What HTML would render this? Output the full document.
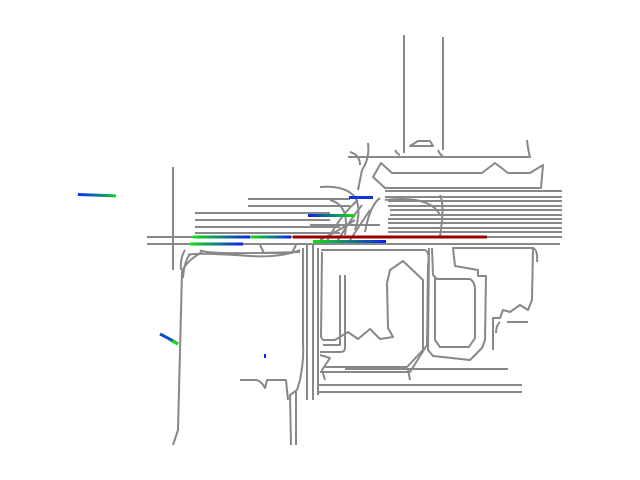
<!DOCTYPE html>
<html><head><meta charset="utf-8"><style>
html,body{margin:0;padding:0;background:#fff;width:640px;height:480px;overflow:hidden}
svg{display:block}
</style></head><body>
<svg width="640" height="480" viewBox="0 0 640 480" xmlns="http://www.w3.org/2000/svg">
<defs>
<linearGradient id="bg" x1="0" x2="1"><stop offset="0" stop-color="#0a22ee"/><stop offset="1" stop-color="#10e010"/></linearGradient>
<linearGradient id="gb" x1="0" x2="1"><stop offset="0" stop-color="#10e010"/><stop offset="1" stop-color="#0a22ee"/></linearGradient>
<linearGradient id="bt" x1="0" x2="1"><stop offset="0" stop-color="#1030ee"/><stop offset="0.5" stop-color="#1070a0"/><stop offset="1" stop-color="#10d020"/></linearGradient>
</defs>
<g fill="none" stroke="#888" stroke-width="2" stroke-linejoin="round">
<path d="M404 35 V153 M443 37 V150"/>
<path d="M348 157 H530 Q528 150 527 140"/>
<path d="M350 152 Q360 155 360 165 M395 150 Q398 155 400 155 M438 150 Q440 155 443 156"/>
<path d="M410 146 L418 141 L430 141 L433 146 Z"/>
<path d="M368 143 Q370 158 362 170 L358 190"/>
<path d="M381 163 L392 173 L482 173 L495 163 L508 173 L530 173 L543 165 L541 188 L385 188 L373 177 Z"/>
<path d="M173 167 V270"/>
<path d="M147 237 H562 M147 244 H560"/>
<path d="M385 191 H562 M385 197 H562 M388 201 H562 M388 206 H562 M390 210 H562 M390 215 H562 M388 219 H562 M388 223 H562 M388 228 H562 M388 232 H562"/>
<path d="M248 199 H350 M248 206 H350 M195 213 H330 M195 220 H330 M195 227 H340 M195 233 H340"/>
<path d="M320 187 Q345 185 355 197 Q362 210 355 230 M330 200 Q350 205 345 235 M440 195 Q445 205 440 236"/>
<path d="M385 200 Q430 195 440 215 M380 198 Q370 205 365 232"/>
<path d="M358 200 Q340 215 325 245 M362 205 Q350 220 335 245 M370 210 Q360 225 350 240 M355 220 Q340 230 320 240 M310 225 H380"/>
<path d="M185 250 Q180 258 181 270 M190 254 Q184 262 183 278"/>
<path d="M200 250 Q205 255 300 252 M188 255 Q195 252 250 256 Q280 258 300 250"/>
<path d="M260 245 L264 253 L292 253 L296 245"/>
<path d="M202 252 Q185 262 182 272 L178 430 L173 445"/>
<path d="M307 245 V400 M313 245 V400 M318 248 V395 M303 248 V345"/>
<path d="M303 345 Q304 360 300 380 L297 390 L290 395 L291 445 M296 392 L296 445"/>
<path d="M240 380 H257 Q262 382 265 388 L267 380 H286 L288 400"/>
<path d="M322 252 L321 337 L323 340 L335 340 L348 332 L358 339 L370 329 L380 339 L393 337 L388 328 L387 283 L390 270 L403 261 L423 280 L423 350 L407 367 L325 367"/>
<path d="M321 250 H425 Q430 252 428 265 L427 345 L410 372 L320 372"/>
<path d="M340 275 V345 H323 M345 275 V348 Q345 352 340 352 H320"/>
<path d="M320 355 L330 358 L322 370 L325 380"/>
<path d="M345 369 H508 M408 369 L410 380"/>
<path d="M318 385 H522 M318 392 H522"/>
<path d="M432 248 L433 275 L437 279 L470 279 Q475 282 475 290 V338 L469 347 H440 L435 340 V278"/>
<path d="M429 248 L428 350 L433 356 L470 360 L482 348 L485 340 L486 276 L478 276 L478 270 L455 266 L453 248 H533 L532 300 L528 310 L520 305 L510 312 L503 310 L500 318 L493 318 L493 350"/>
<path d="M533 248 Q538 250 537 262 M507 322 H528 M500 322 Q496 325 496 333"/>
</g>
<g>
<rect x="293" y="235.5" width="194" height="3" fill="#990000"/>
<rect x="193" y="235.5" width="57" height="3" fill="url(#gb)"/>
<rect x="251" y="235.5" width="40" height="3" fill="url(#gb)"/>
<rect x="190" y="242.5" width="53" height="3" fill="url(#gb)"/>
<rect x="313" y="240" width="73" height="3" fill="url(#gb)"/>
<rect x="308" y="214" width="47" height="3" fill="url(#bg)"/>
<rect x="349" y="196" width="24" height="3" fill="#1035e0"/>
<rect x="78" y="193" width="38" height="3" fill="url(#bt)" transform="rotate(2 78 193)"/>
<rect x="264" y="354" width="2" height="4" fill="#0a22ee"/>
</g>
<path d="M160 334 Q170 339 178 344" stroke="#1050c0" stroke-width="3" fill="none"/>
<path d="M172 341 L178 344" stroke="#10e010" stroke-width="3" fill="none"/>
</svg>
</body></html>
